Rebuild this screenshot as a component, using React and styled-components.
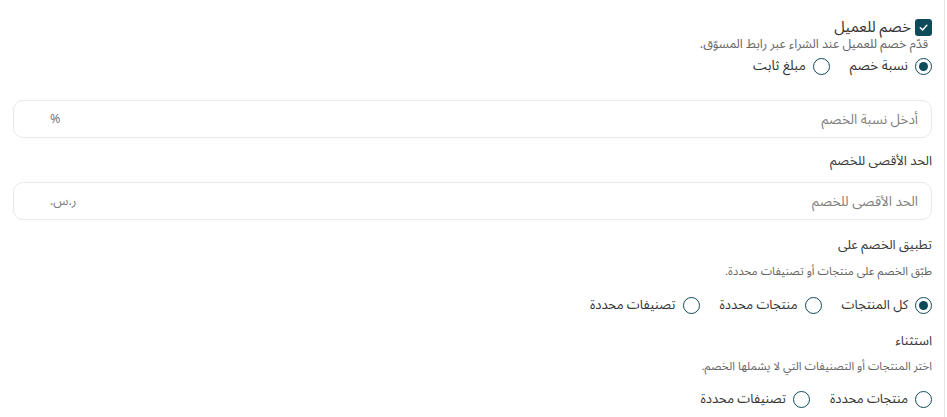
import React from "react";
import styled, { createGlobalStyle } from "styled-components";

const Global = createGlobalStyle`
  html, body { margin: 0; padding: 0; background: #fff; }
  body { font-family: "Noto Sans Arabic", "Noto Sans", "DejaVu Sans", sans-serif; }
`;

const Page = styled.div`
  direction: rtl;
  width: 945px;
  min-height: 417px;
  box-sizing: border-box;
  border-right: 1px solid #e6e6e6;
  padding: 19px 12px 0 13px;
  color: #333;
`;

const CheckRow = styled.label`
  display: flex;
  align-items: center;
  gap: 4px;
  height: 17px;
`;

const CheckBox = styled.span`
  width: 17px;
  height: 17px;
  border-radius: 3px;
  background: #0d4b5a;
  display: flex;
  align-items: center;
  justify-content: center;
  flex: none;
`;

const Title = styled.span`
  font-size: 15px;
  line-height: 17px;
  font-weight: 400;
  color: #333;
`;

const Hint = styled.div`
  font-size: ${(p) => p.$size || 11.5}px;
  line-height: 15px;
  font-weight: 400;
  color: #666;
  margin-top: ${(p) => p.$mt || 0}px;
  padding-right: ${(p) => p.$pr || 0}px;
`;

const RadioGroup = styled.div`
  display: flex;
  align-items: center;
  gap: 20px;
  margin-top: ${(p) => p.$mt || 0}px;
  height: 18px;
`;

const Option = styled.label`
  display: flex;
  align-items: center;
  gap: 7px;
  font-size: ${(p) => p.$size || 13}px;
  line-height: 18px;
  font-weight: 400;
  color: #333;
`;

const Radio = styled.span`
  width: 17px;
  height: 17px;
  box-sizing: border-box;
  border: 1.5px solid #0d4b5a;
  border-radius: 50%;
  display: flex;
  align-items: center;
  justify-content: center;
  flex: none;
  &::after {
    content: "";
    width: 9px;
    height: 9px;
    border-radius: 50%;
    background: ${(p) => (p.$on ? "#0d4b5a" : "transparent")};
  }
`;

const Field = styled.div`
  display: flex;
  align-items: center;
  justify-content: space-between;
  height: 38px;
  box-sizing: border-box;
  border: 1px solid #e9e9e9;
  border-radius: 10px;
  padding: 0 13px 0 36px;
  margin-top: ${(p) => p.$mt || 0}px;
  font-size: 13.5px;
  font-weight: 400;
  color: #808080;
`;

const Suffix = styled.span`
  font-size: 12.5px;
  color: #7a7a7a;
`;

const Label = styled.div`
  font-size: 13px;
  line-height: 16px;
  font-weight: 400;
  color: #3a3a3a;
  margin-top: ${(p) => p.$mt || 0}px;
`;

const Check = () => (
  <svg width="11" height="11" viewBox="0 0 12 12">
    <path d="M2.5 6.3 L5 8.6 L9.6 3.6" fill="none" stroke="#fff" strokeWidth="1.6" strokeLinecap="round" strokeLinejoin="round" />
  </svg>
);

export default function App() {
  return (
    <>
      <Global />
      <Page>
        <CheckRow>
          <CheckBox><Check /></CheckBox>
          <Title>خصم للعميل</Title>
        </CheckRow>
        <Hint $mt={1} $pr={4} $size={12.5}>قدّم خصم للعميل عند الشراء عبر رابط المسوّق.</Hint>
        <RadioGroup $mt={5}>
          <Option $size={13.5}><Radio $on /> نسبة خصم</Option>
          <Option $size={13.5}><Radio /> مبلغ ثابت</Option>
        </RadioGroup>

        <Field $mt={25}>
          <span>أدخل نسبة الخصم</span>
          <Suffix>%</Suffix>
        </Field>

        <Label $mt={15}>الحد الأقصى للخصم</Label>
        <Field $mt={13}>
          <span>الحد الأقصى للخصم</span>
          <Suffix>ر.س.</Suffix>
        </Field>

        <Label $mt={17}>تطبيق الخصم على</Label>
        <Hint $mt={11}>طبّق الخصم على منتجات أو تصنيفات محددة.</Hint>
        <RadioGroup $mt={17}>
          <Option><Radio $on /> كل المنتجات</Option>
          <Option><Radio /> منتجات محددة</Option>
          <Option><Radio /> تصنيفات محددة</Option>
        </RadioGroup>

        <Label $mt={19}>استثناء</Label>
        <Hint $mt={10}>اختر المنتجات أو التصنيفات التي لا يشملها الخصم.</Hint>
        <RadioGroup $mt={16}>
          <Option><Radio /> منتجات محددة</Option>
          <Option><Radio /> تصنيفات محددة</Option>
        </RadioGroup>
      </Page>
    </>
  );
}
